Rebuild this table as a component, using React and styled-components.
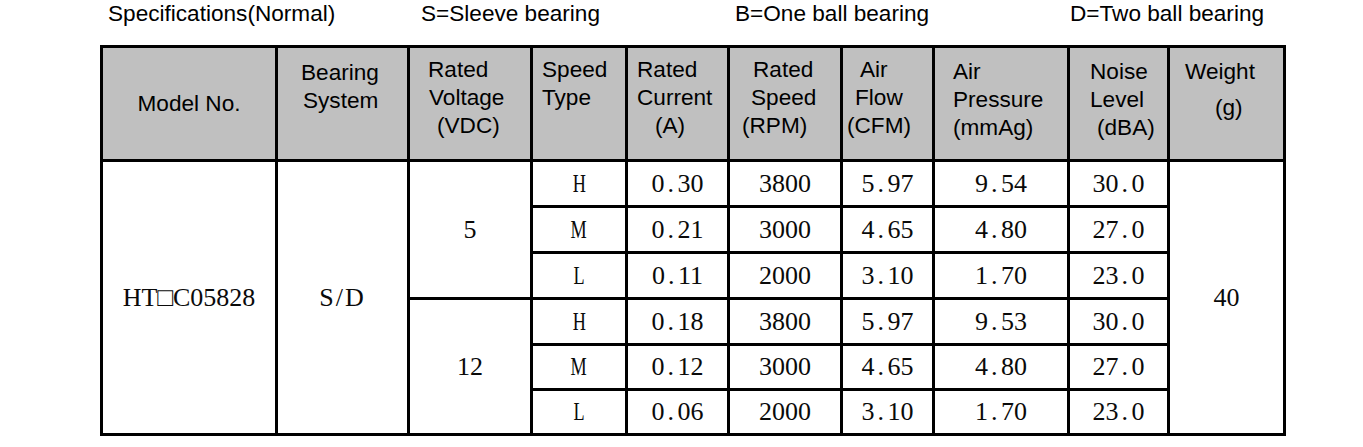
import React from "react";
import styled, { createGlobalStyle } from "styled-components";

const GlobalStyle = createGlobalStyle`
  html, body {
    margin: 0;
    padding: 0;
    background: #fff;
  }
  body {
    font-family: "Liberation Sans", Arial, sans-serif;
    color: #000;
  }
`;

const columns = [175, 132, 123, 95, 102, 113, 92, 135, 100, 116];

const headers = [
  { middle: true, lines: [{ text: "Model No." }] },
  { top: 11, lines: [{ text: "Bearing", indent: 23 }, { text: "System", indent: 25 }] },
  {
    top: 8,
    lines: [
      { text: "Rated", indent: 18 },
      { text: "Voltage", indent: 19 },
      { text: "(VDC)", indent: 27 },
    ],
  },
  { top: 8, lines: [{ text: "Speed", indent: 9 }, { text: "Type", indent: 9 }] },
  {
    top: 8,
    lines: [
      { text: "Rated", indent: 9 },
      { text: "Current", indent: 9 },
      { text: "(A)", indent: 27 },
    ],
  },
  {
    top: 8,
    lines: [
      { text: "Rated", indent: 23 },
      { text: "Speed", indent: 21 },
      { text: "(RPM)", indent: 12 },
    ],
  },
  {
    top: 8,
    lines: [
      { text: "Air", indent: 17 },
      { text: "Flow", indent: 12 },
      { text: "(CFM)", indent: 4 },
    ],
  },
  {
    top: 10,
    lines: [
      { text: "Air", indent: 18 },
      { text: "Pressure", indent: 18 },
      { text: "(mmAg)", indent: 18 },
    ],
  },
  {
    top: 10,
    lines: [
      { text: "Noise", indent: 20 },
      { text: "Level", indent: 20 },
      { text: "(dBA)", indent: 27 },
    ],
  },
  { top: 10, lines: [{ text: "Weight", indent: 15 }, { text: "(g)", indent: 45, gap: 8 }] },
];

const groups = [
  {
    voltage: "5",
    rows: [
      ["H", "0.30", "3800", "5.97", "9.54", "30.0"],
      ["M", "0.21", "3000", "4.65", "4.80", "27.0"],
      ["L", "0.11", "2000", "3.10", "1.70", "23.0"],
    ],
  },
  {
    voltage: "12",
    rows: [
      ["H", "0.18", "3800", "5.97", "9.53", "30.0"],
      ["M", "0.12", "3000", "4.65", "4.80", "27.0"],
      ["L", "0.06", "2000", "3.10", "1.70", "23.0"],
    ],
  },
];

const rowHeights = [46, 46, 46, 46, 45, 45];

const Num = ({ value }) => {
  const [whole, frac] = value.split(".");
  if (frac === undefined) return <>{value}</>;
  return (
    <>
      {whole}
      <Dot>.</Dot>
      {frac}
    </>
  );
};

export default function App() {
  return (
    <Page>
      <GlobalStyle />
      <Legend>
        <span>Specifications(Normal)</span>
        <span>S=Sleeve bearing</span>
        <span>B=One ball bearing</span>
        <span>D=Two ball bearing</span>
      </Legend>
      <Table>
        <colgroup>
          {columns.map((w, i) => (
            <col key={i} style={{ width: w }} />
          ))}
        </colgroup>
        <thead>
          <HeadRow>
            {headers.map((h, i) => (
              <HeadCell key={i} $middle={h.middle} $top={h.top}>
                {h.lines.map((l) => (
                  <HeadLine key={l.text} $indent={l.indent} $gap={l.gap}>
                    {l.text}
                  </HeadLine>
                ))}
              </HeadCell>
            ))}
          </HeadRow>
        </thead>
        <tbody>
          {groups.map((g, gi) =>
            g.rows.map((r, ri) => {
              const idx = gi * 3 + ri;
              return (
                <BodyRow key={idx} $height={rowHeights[idx]}>
                  {idx === 0 && (
                    <>
                      <Cell rowSpan={6}>HT□C05828</Cell>
                      <Cell rowSpan={6}>
                        <Spaced>S/D</Spaced>
                      </Cell>
                    </>
                  )}
                  {ri === 0 && <Cell rowSpan={3}>{g.voltage}</Cell>}
                  <Cell>
                    <Grade>{r[0]}</Grade>
                  </Cell>
                  {r.slice(1).map((v, ci) => (
                    <Cell key={ci}>
                      <Num value={v} />
                    </Cell>
                  ))}
                  {idx === 0 && <Cell rowSpan={6}>40</Cell>}
                </BodyRow>
              );
            })
          )}
        </tbody>
      </Table>
    </Page>
  );
}

const Page = styled.div`
  width: 1363px;
  height: 447px;
  padding-left: 100px;
  box-sizing: border-box;
  overflow: hidden;
`;

const Legend = styled.div`
  display: grid;
  grid-template-columns: 313px 314px 335px auto;
  padding: 2px 0 0 8px;
  height: 45px;
  box-sizing: border-box;
  font-size: 22.6px;
  line-height: 24px;
  white-space: nowrap;
`;

const Table = styled.table`
  border-collapse: collapse;
  table-layout: fixed;
  width: 1186px;
  border: 3px solid #000;
`;

const HeadRow = styled.tr`
  height: 114px;
`;

const HeadCell = styled.th`
  background: #c0c0c0;
  border: 3px solid #000;
  padding: ${(p) => (p.$middle ? 0 : p.$top)}px 0 0;
  vertical-align: ${(p) => (p.$middle ? "middle" : "top")};
  text-align: ${(p) => (p.$middle ? "center" : "left")};
  font-weight: 400;
  font-size: 22.6px;
  line-height: 28px;
`;

const HeadLine = styled.span`
  display: block;
  margin-left: ${(p) => p.$indent || 0}px;
  margin-top: ${(p) => p.$gap || 0}px;
  white-space: nowrap;
`;

const BodyRow = styled.tr`
  height: ${(p) => p.$height}px;
`;

const Cell = styled.td`
  border: 3px solid #000;
  padding: 0;
  text-align: center;
  vertical-align: middle;
  font-family: "Liberation Serif", "Noto Sans CJK SC", serif;
  font-size: 26px;
  line-height: 30px;
  color: #0a0a0a;
  white-space: nowrap;
`;

const Dot = styled.span`
  display: inline-block;
  width: 0.5em;
  text-align: left;
  padding-left: 3px;
  box-sizing: border-box;
`;

const Grade = styled.span`
  display: inline-block;
  transform: scaleX(0.7);
`;

const Spaced = styled.span`
  letter-spacing: 2px;
`;
